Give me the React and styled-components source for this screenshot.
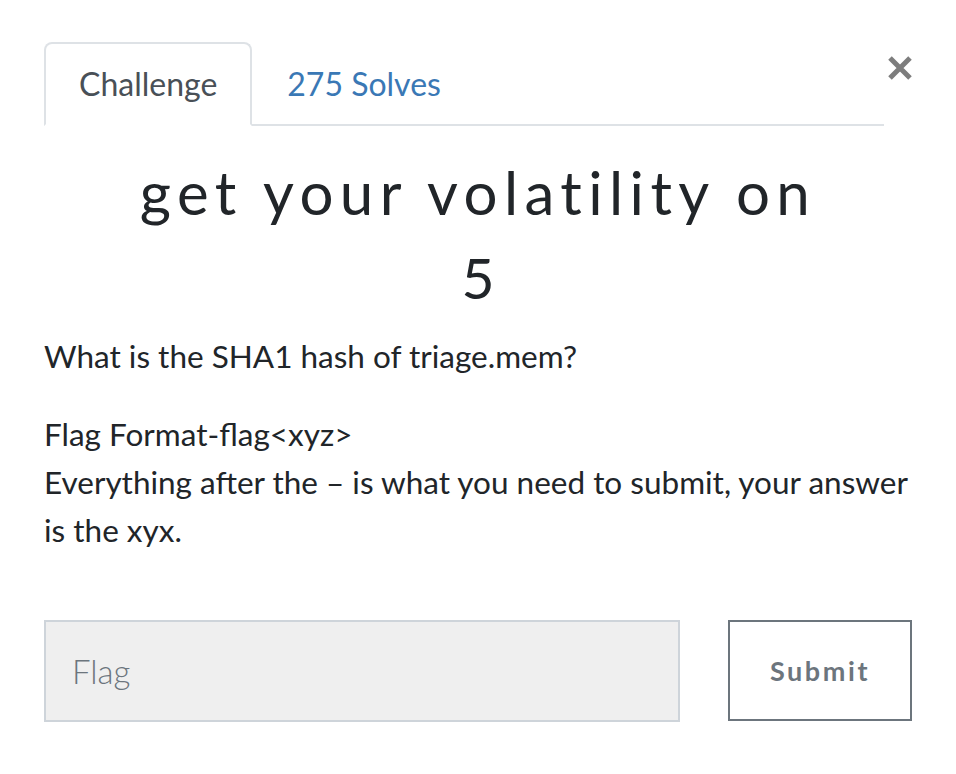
import React, { useState } from 'react'
import styled, { createGlobalStyle } from 'styled-components'

const GlobalStyle = createGlobalStyle`
  * { box-sizing: border-box; }
  body {
    margin: 0;
    background: #fff;
    font-family: Lato, "Liberation Sans", sans-serif;
    color: #212529;
  }
`;

const Page = styled.div`
  width: 956px;
  padding: 42px 44px 0;
`;

const TopRow = styled.div`
  display: flex;
  align-items: flex-start;
`;

const Nav = styled.ul`
  flex: 1;
  display: flex;
  margin: 0;
  padding: 0;
  list-style: none;
  border-bottom: 2px solid #dee2e6;
`;

const Tab = styled.li`
  margin-bottom: -2px;
  padding: 16px 33px;
  font-size: 32px;
  line-height: 48px;
  border: 2px solid ${p => (p.$active ? '#dee2e6' : 'transparent')};
  border-bottom-color: ${p => (p.$active ? '#fff' : 'transparent')};
  border-radius: 8px 8px 0 0;
  background: ${p => (p.$active ? '#fff' : 'transparent')};
  color: ${p => (p.$active ? '#495057' : '#3a78b5')};
  cursor: pointer;
`;

const CloseButton = styled.button`
  width: 28px;
  height: 52px;
  padding: 0;
  border: none;
  background: transparent;
  display: flex;
  align-items: center;
  justify-content: flex-end;
  cursor: pointer;
`;

const Title = styled.h3`
  margin: 31px 0 0;
  text-align: center;
  font-family: Lato, "Liberation Sans", sans-serif;
  font-weight: 400;
  font-size: 60px;
  line-height: 70px;
  letter-spacing: 6.4px;
  color: #212529;
`;

const Value = styled.h4`
  margin: 16px 0 0;
  text-align: center;
  font-family: Lato, "Liberation Sans", sans-serif;
  font-weight: 400;
  font-size: 57px;
  line-height: 68px;
  color: #212529;
`;

const Description = styled.div`
  margin-top: 21px;
  font-size: 31.5px;
  line-height: 48px;
`;

const Para = styled.p`
  margin: 0 0 30px;
`;

const FormRow = styled.form`
  display: grid;
  grid-template-columns: 636px 1fr;
  column-gap: 48px;
  margin-top: 66px;
`;

const FlagInput = styled.input`
  height: 102px;
  padding: 0 26px;
  border: 2px solid #ced4da;
  border-radius: 0;
  background: #efefef;
  font-family: Lato, "Liberation Sans", sans-serif;
  font-size: 33px;
  font-weight: 300;
  color: #495057;
  outline: none;

  &::placeholder {
    color: #6c757d;
  }
`;

const SubmitButton = styled.button`
  height: 101px;
  border: 2px solid #6c757d;
  border-radius: 0;
  background: #fff;
  color: #6c757d;
  font-family: Lato, "Liberation Sans", sans-serif;
  font-size: 27px;
  font-weight: 700;
  letter-spacing: 2.6px;
  cursor: pointer;
`;

const CloseIcon = () => (
  <svg width="24" height="24" viewBox="0 0 24 24">
    <path d="M2 2 L22 22 M22 2 L2 22" stroke="#7d7d7d" strokeWidth="5" strokeLinecap="butt" />
  </svg>
);

export default function App() {
  const [tab, setTab] = useState('challenge')
  const [flag, setFlag] = useState('')

  return (
    <Page>
      <GlobalStyle />
      <TopRow>
        <Nav>
          <Tab $active={tab === 'challenge'} onClick={() => setTab('challenge')}>Challenge</Tab>
          <Tab $active={tab === 'solves'} onClick={() => setTab('solves')}>275 Solves</Tab>
        </Nav>
        <CloseButton aria-label="Close"><CloseIcon /></CloseButton>
      </TopRow>

      <Title>get your volatility on</Title>
      <Value>5</Value>

      <Description>
        <Para>What is the SHA1 hash of triage.mem?</Para>
        <Para>
          Flag Format-flag&lt;xyz&gt;<br />
          Everything after the – is what you need to submit, your answer is the xyx.
        </Para>
      </Description>

      <FormRow onSubmit={e => e.preventDefault()}>
        <FlagInput placeholder="Flag" value={flag} onChange={e => setFlag(e.target.value)} />
        <SubmitButton type="submit">Submit</SubmitButton>
      </FormRow>
    </Page>
  )
}
